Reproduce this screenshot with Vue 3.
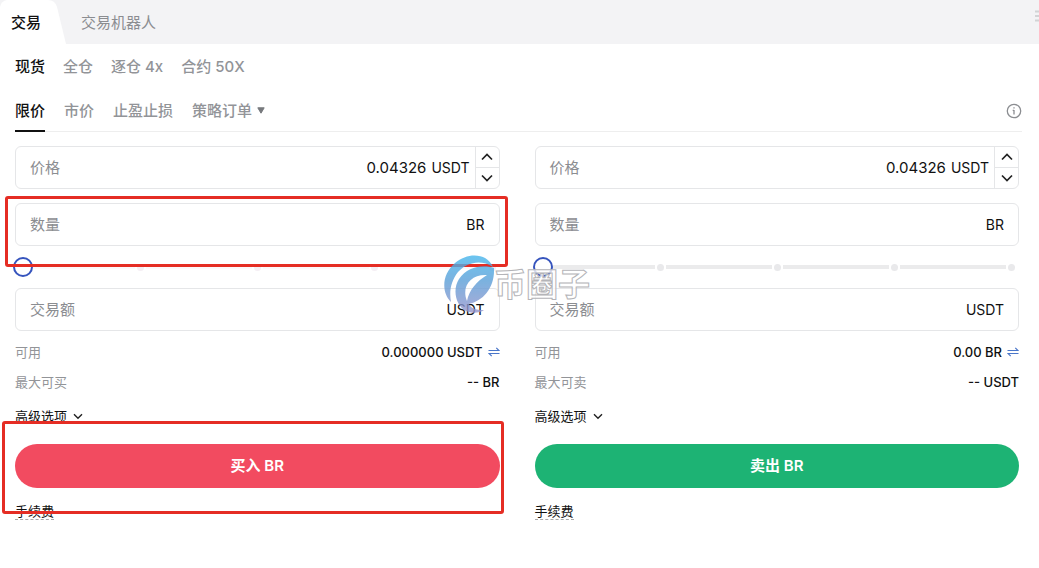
<script setup>
import { ref } from 'vue'

const modes = ['现货', '全仓', '逐仓 4x', '合约 50X']
const orderTypes = ['限价', '市价', '止盈止损', '策略订单']
const sides = ref([
  { id: 'buy', base: 'BR', price: '0.04326', amount: '', total: '', pct: 0, available: '0.000000 USDT', maxLabel: '最大可买', max: '-- BR', action: '买入 BR' },
  { id: 'sell', base: 'BR', price: '0.04326', amount: '', total: '', pct: 0, available: '0.00 BR', maxLabel: '最大可卖', max: '-- USDT', action: '卖出 BR' },
])
</script>

<template>
  <div class="panel">
    <header class="top">
      <button class="top-tab active" type="button">
        <svg class="tab-shape" viewBox="0 0 68 44" preserveAspectRatio="none" aria-hidden="true">
          <path d="M0 7Q1 1 7 0H48Q55 0 57 7L66 44H0Z" fill="#fff" />
        </svg>
        <span>交易</span>
      </button>
      <button class="top-tab" type="button"><span>交易机器人</span></button>
      <svg class="grip" width="4" height="14" viewBox="0 0 4 14" aria-hidden="true">
        <path d="M0 2.500H4M0 7H4M0 11.500H4" stroke="#d2d3d5" stroke-width="2" />
      </svg>
    </header>

    <nav class="modes">
      <button v-for="(m, i) in modes" :key="m" type="button" :class="{ active: i === 0 }">{{ m }}</button>
    </nav>

    <nav class="types">
      <button v-for="(t, i) in orderTypes" :key="t" type="button" :class="{ active: i === 0 }">
        {{ t }}
        <svg v-if="i === 3" width="8" height="7" viewBox="0 0 8 7" aria-hidden="true">
          <path d="M.8.8H7.200L4 6.200Z" fill="#77797d" stroke="#77797d" stroke-linejoin="round" />
        </svg>
      </button>
      <button class="info" type="button" aria-label="info">
        <svg width="16" height="16" viewBox="0 0 16 16" fill="none" stroke="#8b8d91" aria-hidden="true">
          <circle cx="8" cy="8" r="6.700" stroke-width="1.300" />
          <path d="M8 7V11.500M6.700 7.300H8M8 4.300V5.600" stroke-width="1.300" />
        </svg>
      </button>
    </nav>

    <main class="forms">
      <form v-for="s in sides" :key="s.id" :class="['form', s.id]" @submit.prevent>
        <div class="field">
          <label :for="s.id + '-price'">价格</label>
          <input :id="s.id + '-price'" v-model="s.price" type="text" />
          <span class="unit">USDT</span>
          <div class="stepper">
            <button type="button" aria-label="+">
              <svg width="12" height="8" viewBox="0 0 12 8" aria-hidden="true"><path d="M1 6.500L6 1.500L11 6.500" fill="none" stroke="#222" stroke-width="1.700" /></svg>
            </button>
            <button type="button" aria-label="-">
              <svg width="12" height="8" viewBox="0 0 12 8" aria-hidden="true"><path d="M1 1.500L6 6.500L11 1.500" fill="none" stroke="#222" stroke-width="1.700" /></svg>
            </button>
          </div>
        </div>

        <div class="field plain">
          <label :for="s.id + '-amount'">数量</label>
          <input :id="s.id + '-amount'" v-model="s.amount" type="text" />
          <span class="unit">{{ s.base }}</span>
        </div>

        <div class="slider">
          <div class="track" aria-hidden="true">
            <template v-for="n in 4" :key="n"><i class="bar"></i><i class="dot"></i></template>
          </div>
          <input v-model="s.pct" type="range" min="0" max="100" :aria-label="s.action" />
        </div>

        <div class="field plain">
          <label :for="s.id + '-total'">交易额</label>
          <input :id="s.id + '-total'" v-model="s.total" type="text" />
          <span class="unit">USDT</span>
        </div>

        <div class="row first">
          <span class="key">可用</span>
          <span class="value">{{ s.available }}
            <svg width="12" height="10" viewBox="0 0 12 10" fill="none" stroke="#4a76c9" stroke-width="1.200" aria-hidden="true">
              <path d="M.5 3.500H11L8.300.8M11.500 6.500H1L3.700 9.200" />
            </svg>
          </span>
        </div>
        <div class="row">
          <span class="key">{{ s.maxLabel }}</span>
          <span class="value">{{ s.max }}</span>
        </div>

        <button class="advanced" type="button">
          高级选项
          <svg width="10" height="7" viewBox="0 0 10 7" aria-hidden="true"><path d="M1 1.200L5 5.200L9 1.200" fill="none" stroke="#222" stroke-width="1.400" /></svg>
        </button>
        <button class="submit" type="submit">{{ s.action }}</button>
        <a class="fee" href="#">手续费</a>
      </form>
    </main>

    <div class="mark amount-mark"></div>
    <div class="mark submit-mark"></div>
    <svg class="brand" width="150" height="60" viewBox="0 0 150 60" role="img" aria-label="币圈子">
      <defs>
        <linearGradient id="wave" x1="0" y1="0" x2="0" y2="60" gradientUnits="userSpaceOnUse">
          <stop offset="0" stop-color="#45b8ee" />
          <stop offset=".45" stop-color="#5b9fd8" />
          <stop offset="1" stop-color="#9a94cc" />
        </linearGradient>
      </defs>
      <g fill="url(#wave)" opacity=".8">
        <path d="M8 48C-2 38 -1 20 12 9C25 -2 44 -1 50 13C38 5 24 8 15 18C8 27 6 37 8 48Z" />
        <path d="M51 14C40 10 24 13 16 25C9 36 13 52 23 57C29 60 37 59 41 56C32 56 28 54 26 50C40 47 52 34 51 14ZM44 21C34 27 26 36 24 47C18 32 28 20 44 21Z" fill-rule="evenodd" />
      </g>
      <text x="51" y="42" class="brand-text">币圈子</text>
    </svg>
  </div>
</template>

<style>
body { margin: 0; background: #fff; }
</style>

<style scoped>
.panel {
  position: relative;
  overflow: hidden;
  min-height: 100vh;
  font: 15px/20px Inter, "Noto Sans CJK SC", sans-serif;
  color: #111;
}
.panel * { box-sizing: border-box; }
button {
  border: 0;
  padding: 0;
  background: none;
  font: inherit;
  color: inherit;
}
svg { display: block; }
.top {
  display: flex;
  align-items: center;
  height: 44px;
  background: #f3f3f5;
}
.top-tab {
  position: relative;
  height: 44px;
  padding: 2px 15px 0 11px;
  color: #8b8d91;
}
.top-tab.active {
  width: 70px;
  color: #111;
  font-weight: 500;
  text-align: left;
}
.tab-shape {
  position: absolute;
  inset: 0;
  width: 68px;
  height: 44px;
}
.top-tab span { position: relative; }
.grip { margin: 0 0 12px auto; }
.modes, .types {
  display: flex;
  gap: 18px;
  color: #929498;
  font-weight: 500;
}
.modes { height: 44px; margin-left: 15px; padding-top: 2px; }
.types {
  gap: 19px;
  height: 44px;
  margin: 0 17px 0 15px;
  border-bottom: 1px solid #eee;
}
.types button {
  display: flex;
  align-items: center;
  gap: 5px;
  height: 44px;
  padding-top: 3px;
  border-bottom: 2px solid transparent;
}
.active { color: #111; }
.types .active { border-color: #111; }
.types .info { margin-left: auto; }
.forms {
  display: grid;
  grid-template-columns: 1fr 1fr;
  gap: 35px;
  padding: 14px 20px 0 15px;
}
.form {
  display: flex;
  flex-direction: column;
}
.field {
  display: flex;
  align-items: center;
  height: 43px;
  border: 1px solid #e5e6e8;
  border-radius: 6px;
  padding-left: 14px;
}
.field label { color: #8b8d91; }
.field input {
  flex: 1;
  min-width: 0;
  border: 0;
  padding: 0 5px;
  outline: 0;
  background: none;
  font: inherit;
  color: inherit;
  text-align: right;
}
.unit { font-size: 14px; }
.field + .field { margin-top: 14px; }
.plain { padding-right: 14px; }
.stepper {
  display: flex;
  flex-direction: column;
  align-self: stretch;
  width: 24px;
  margin-left: 5px;
  border-left: 1px solid #e5e6e8;
}
.stepper button {
  display: grid;
  flex: 1;
  place-items: center;
}
.stepper button + button { border-top: 1px solid #e5e6e8; }
.slider {
  position: relative;
  height: 42px;
}
.track {
  display: flex;
  align-items: center;
  gap: 2px;
  height: 42px;
  padding: 0 4px 0 14px;
}
.bar {
  flex: 1;
  height: 4px;
  background: #ebebec;
}
.buy .bar { background: #fdf8fa; }
.dot {
  width: 7px;
  height: 7px;
  border-radius: 50%;
  background: #e9e9eb;
}
.buy .dot { background: #f5eff4; }
.slider input {
  position: absolute;
  inset: 0;
  width: 100%;
  height: 42px;
  margin: 0 -2px;
  appearance: none;
  background: none;
}
.slider input::-webkit-slider-thumb {
  appearance: none;
  width: 20px;
  height: 20px;
  border: 2px solid #3654bd;
  border-radius: 50%;
  background: #fff;
}
.row {
  display: flex;
  justify-content: space-between;
  height: 30px;
  font-size: 13px;
  line-height: 30px;
}
.first { margin-top: 6px; }
.key { color: #929498; }
.value {
  display: flex;
  align-items: center;
  gap: 5px;
  font-weight: 500;
}
.advanced {
  display: flex;
  align-items: center;
  align-self: flex-start;
  gap: 6px;
  height: 38px;
  font-size: 13px;
}
.submit {
  height: 44px;
  margin-top: 9px;
  border-radius: 22px;
  color: #fff;
  font-weight: 600;
}
.buy .submit { background: #f24b60; }
.sell .submit { background: #1db374; }
.fee {
  align-self: flex-start;
  margin-top: 15px;
  border-bottom: 1px dashed #aaa;
  color: inherit;
  font-size: 13px;
  line-height: 16px;
  text-decoration: none;
}
.mark {
  position: absolute;
  border: 3px solid #e52d24;
  border-radius: 3px;
}
.amount-mark { left: 5px; top: 196px; width: 503px; height: 71px; }
.submit-mark { left: 2px; top: 421px; width: 502px; height: 93px; }
.brand {
  position: absolute;
  left: 443px;
  top: 254px;
  pointer-events: none;
}
.brand-text {
  font: 700 32px "Noto Sans CJK SC", sans-serif;
  fill: #fff;
  fill-opacity: .8;
  stroke: #b4b4b8;
  stroke-width: 1;
}
</style>
